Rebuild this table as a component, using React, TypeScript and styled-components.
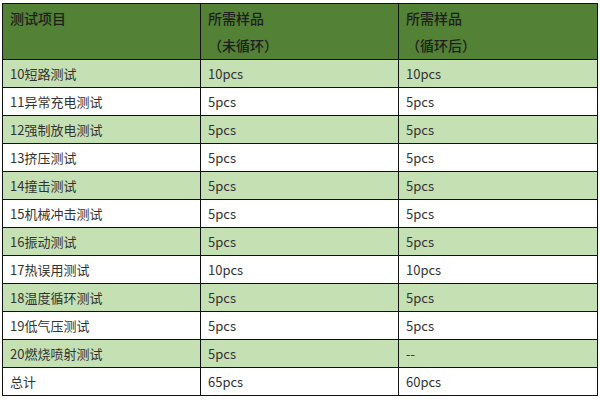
import React from "react";
import styled, { createGlobalStyle } from "styled-components";

const GlobalStyle = createGlobalStyle`
    body {
        margin: 0;
        background: #ffffff;
        font-family: "Noto Sans CJK SC", "Noto Sans", sans-serif;
    }
`;

const Page = styled.div`
    padding: 3px 3px 0 2px;
`;

const Table = styled.table`
    width: 595px;
    border-collapse: collapse;
    table-layout: fixed;
    color: #333333;
    font-size: 13px;
`;

const HeadCell = styled.th`
    background: #538135;
    color: #1e1e1e;
    border: 1px solid #111111;
    font-size: 14px;
    font-weight: 500;
    text-align: left;
    vertical-align: top;
    line-height: 27px;
    padding: 1px 7px 0;
`;

const Row = styled.tr<{ $shaded: boolean }>`
    background: ${(p) => (p.$shaded ? "#c5e0b3" : "#ffffff")};
`;

const Cell = styled.td`
    border: 1px solid #111111;
    line-height: 26px;
    padding: 1px 7px 0;
    vertical-align: top;
    white-space: nowrap;
`;

const rows: [string, string, string][] = [
    ["10短路测试", "10pcs", "10pcs"],
    ["11异常充电测试", "5pcs", "5pcs"],
    ["12强制放电测试", "5pcs", "5pcs"],
    ["13挤压测试", "5pcs", "5pcs"],
    ["14撞击测试", "5pcs", "5pcs"],
    ["15机械冲击测试", "5pcs", "5pcs"],
    ["16振动测试", "5pcs", "5pcs"],
    ["17热误用测试", "10pcs", "10pcs"],
    ["18温度循环测试", "5pcs", "5pcs"],
    ["19低气压测试", "5pcs", "5pcs"],
    ["20燃烧喷射测试", "5pcs", "--"],
    ["总计", "65pcs", "60pcs"],
];

const App = () => {
    return (
        <>
            <GlobalStyle />
            <Page>
                <Table>
                    <colgroup>
                        <col style={{ width: 198 }} />
                        <col style={{ width: 198 }} />
                        <col style={{ width: 199 }} />
                    </colgroup>
                    <thead>
                        <tr>
                            <HeadCell>测试项目</HeadCell>
                            <HeadCell>
                                所需样品
                                <br />
                                （未循环）
                            </HeadCell>
                            <HeadCell>
                                所需样品
                                <br />
                                （循环后）
                            </HeadCell>
                        </tr>
                    </thead>
                    <tbody>
                        {rows.map((r, i) => (
                            <Row key={r[0]} $shaded={i % 2 === 0}>
                                <Cell>{r[0]}</Cell>
                                <Cell>{r[1]}</Cell>
                                <Cell>{r[2]}</Cell>
                            </Row>
                        ))}
                    </tbody>
                </Table>
            </Page>
        </>
    );
};

export default App;
